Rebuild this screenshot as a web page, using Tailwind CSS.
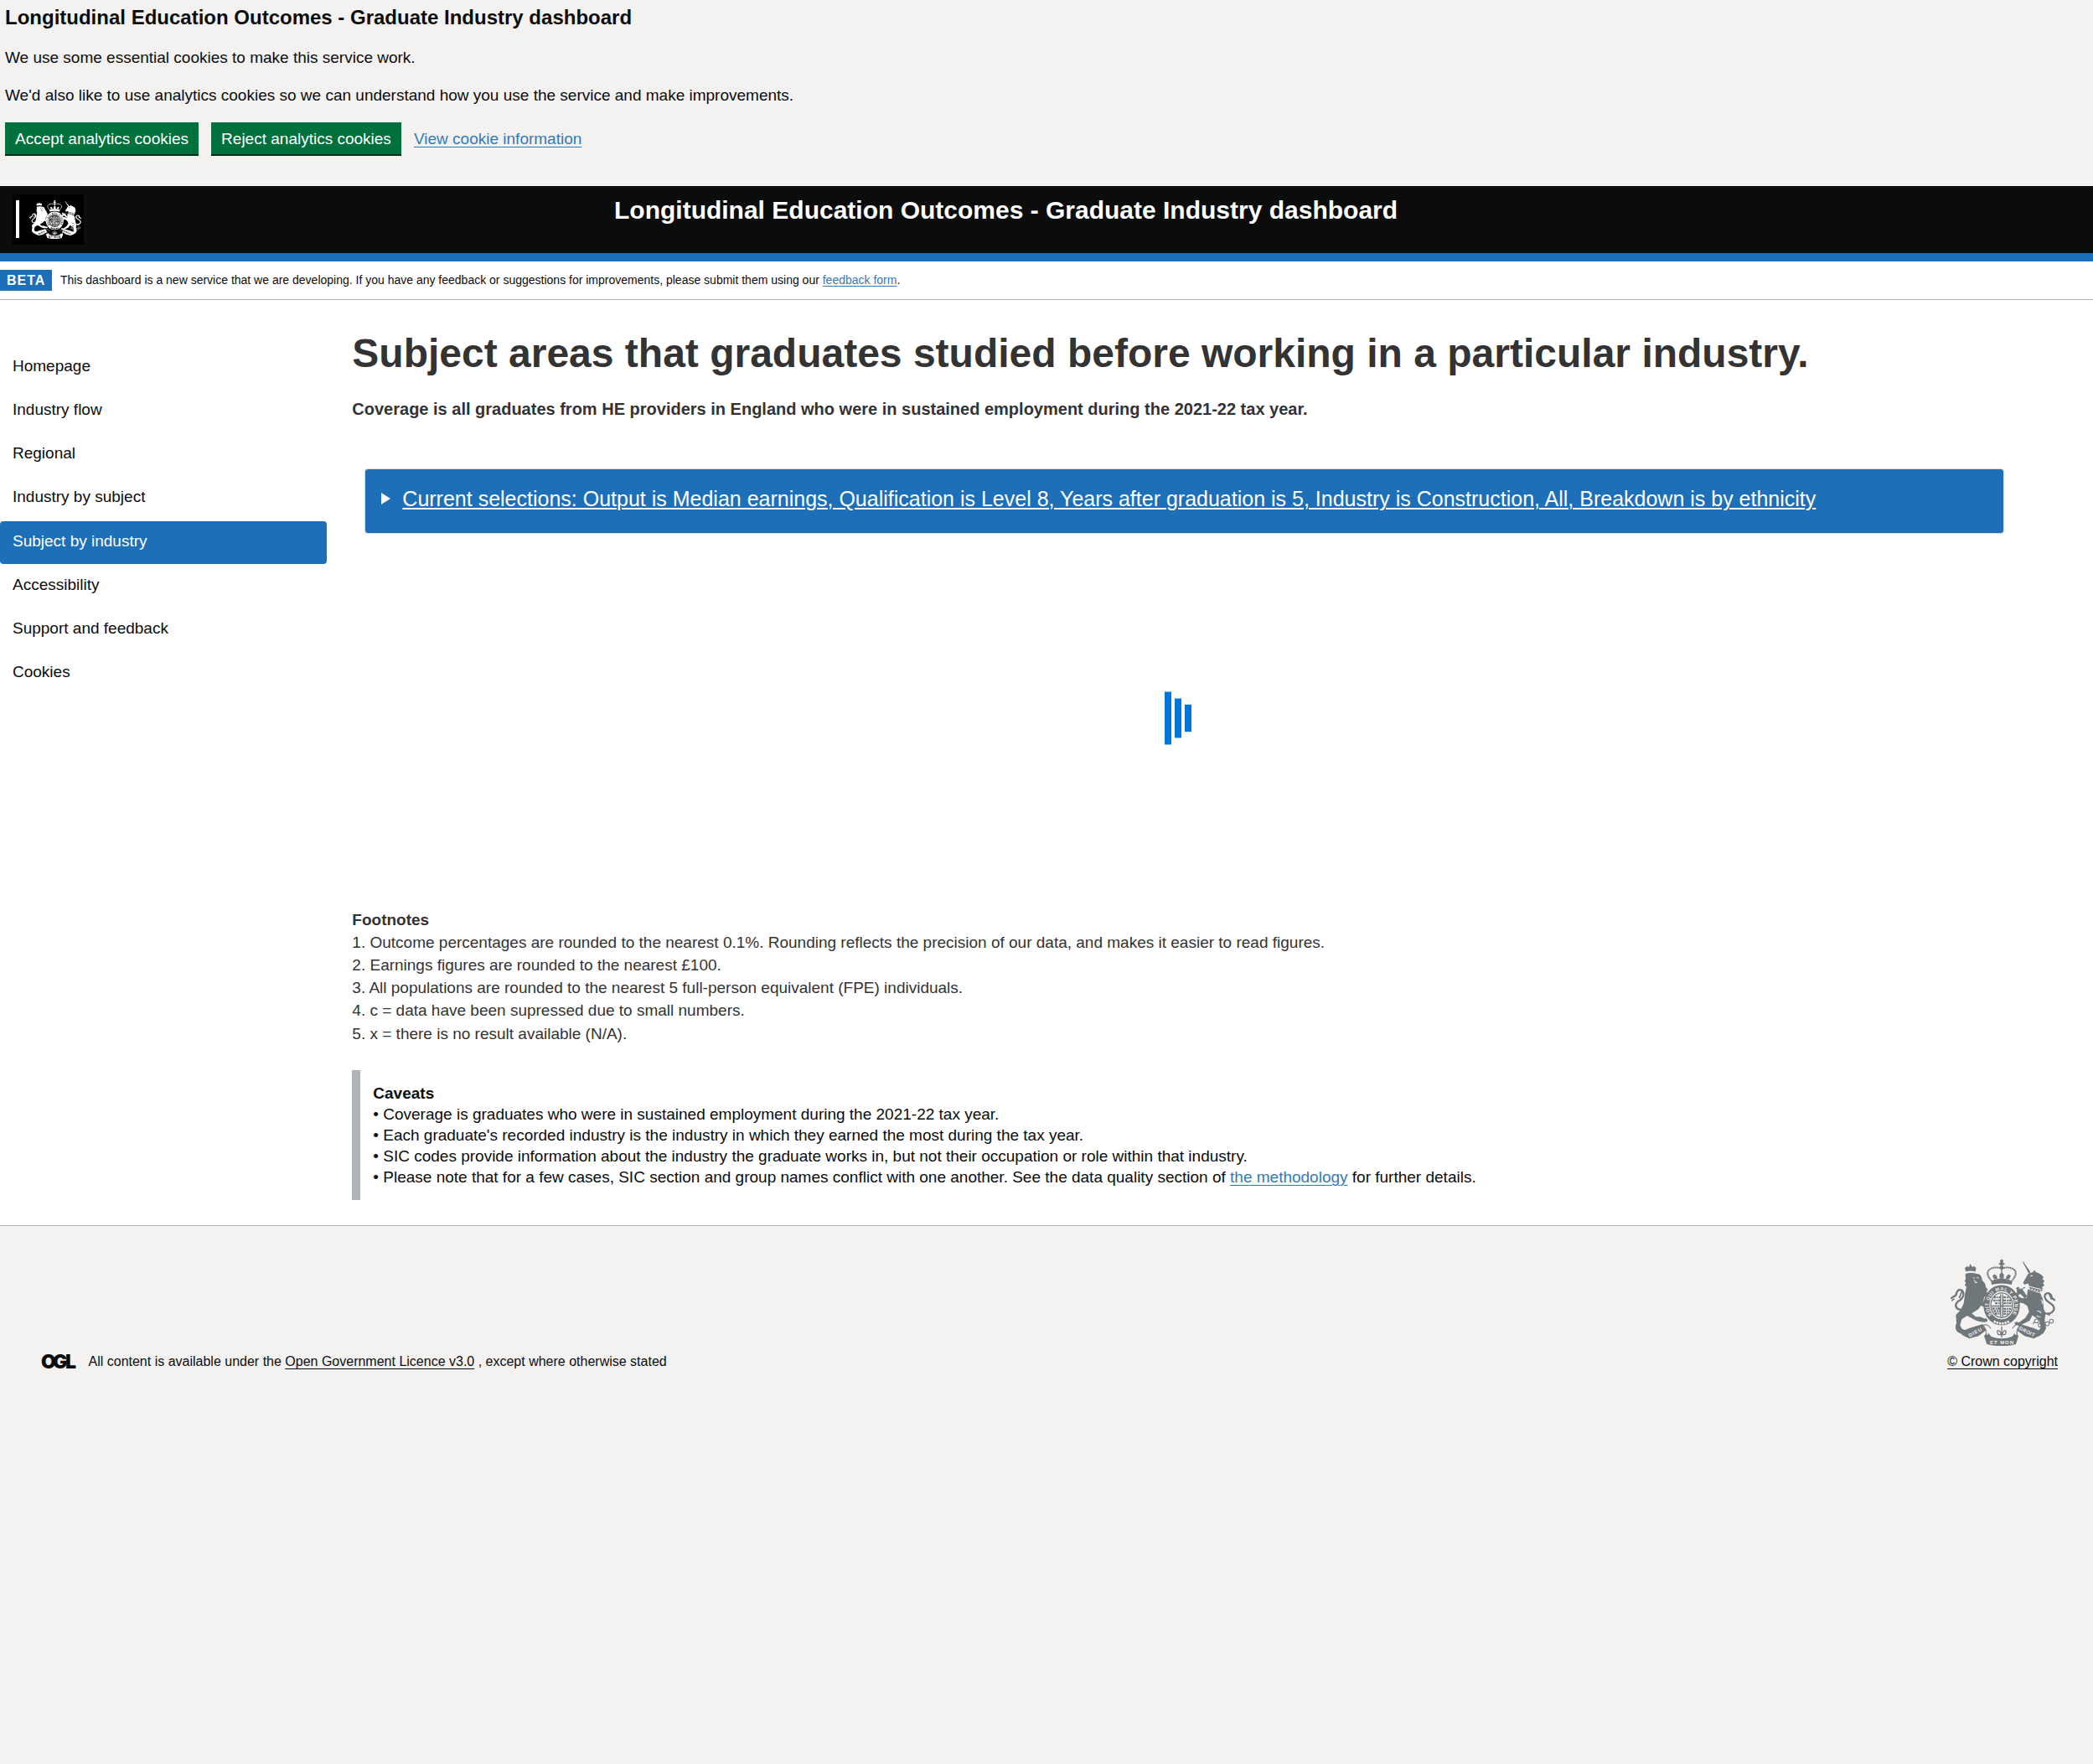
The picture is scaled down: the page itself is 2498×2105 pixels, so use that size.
<!DOCTYPE html>
<html lang="en">
<head>
<meta charset="utf-8">
<title>Longitudinal Education Outcomes - Graduate Industry dashboard</title>
<script src="https://cdn.jsdelivr.net/npm/@tailwindcss/browser@4"></script>
</head>
<body class="bg-[#f3f2f1] font-['Liberation_Sans',Arial,sans-serif] text-[19px] leading-[25px] text-[#0b0c0c]">

<!-- Shared coat of arms, drawn in currentColor with --ground as the knock-out colour -->
<svg class="hidden" aria-hidden="true">
  <symbol id="arms" viewBox="84 158 375 308" preserveAspectRatio="none">
    <g fill="currentColor" stroke="none">
      <!-- crown -->
      <circle cx="267" cy="164" r="6"/><path d="M263 168h8l3 6-3 6h-8l-3-6zM257 171h20v6h-20z"/>
      <circle cx="267" cy="187" r="7"/>
      <path d="M229 234q38-10 76 0l-2 14q-36-9-72 0z"/>
      <path d="M240 228l-6-12 8-6 8 8 2 8zM260 226l-1-14 8-9 8 9-1 14zM294 228l6-12-8-6-8 8-2 8z"/>
      <!-- lion -->
      <path d="M139 201l-4-12 8-7 7 3 5-12 6 12 7-3 8 7-4 12q-17-5-33 0z"/>
      <path d="M137 208q26-7 51 3 10 10 9 22 12 9 13 22l8 12-5 2 4 13-11 9q-8 16 1 25l6 8q-11 7-20-2-6 13-20 20l-13 8 14 12 18 1 13 6 8-1 4 8-6 5q-20 2-38-6l-30-17-19 13-6 22 8 13 18 6 1 8-17 4q-14-1-22-11-8-13-1-28l-2-30 16-15 12-25 5-36 5-24-6-6 4-8-5-6 4-7z"/>
      <!-- unicorn -->
      <path d="M341 165l5 3 24 35-6 5z"/>
      <path d="M362 209l18-7 4-7 5 8q22 6 28 20l-4 4 8 9-6 5 5 10-8 4 1 12-8 8-38-10-3-16-2-6-14 5-4-8 8-14z"/>
      <path d="M360 264l45 14 9 20 4 37 6 13-3 27 5 29-10 18-16 6-8-11 7-4 8-13-6-26-24-17-10 19-32 16-16 4-5-7 19-9 19-14 13-21-6-21-14-10-17-3-10-15-2-18 8-2 4 14 12 6 17-1z"/>
      <path d="M321 268l14-7 11 10 13 19-10 6-14-15-12 3z"/>
      <path d="M318 260l10-5 3 8-8 6zM312 384l11-5 4 8-9 3z"/>
    </g>
    <g fill="none" stroke="currentColor">
      <!-- crown arches -->
      <path stroke-width="6" stroke-dasharray="6 1.500" d="M231 234q-24-26-8-40 18-13 44-4 27-9 44 4 16 14-8 40"/>
      <path stroke-width="4" d="M267 188v22M238 232q29-8 58 0"/>
      <!-- lion tail, unicorn tail -->
      <path stroke-width="7" d="M138 338q-31 2-35-13-2-13 15-22 16-13 11-29-4-9-14-8-9 4-12 20l-19 11"/>
      <path stroke-width="5" d="M98 298l-10 7M127 266l-12 30"/>
      <path stroke-width="7" d="M417 349q28 8 37-12 3-14-13-23-21-12-20-27 5-12 16-8 10 4 9 16l13 9"/>
      <path stroke-width="5" d="M430 352l10 5M437 281l9 20"/>
      <!-- chain -->
      <g stroke-width="3"><circle cx="392" cy="377" r="7"/><circle cx="405" cy="392" r="7"/><circle cx="430" cy="387" r="7"/><circle cx="445" cy="378" r="7"/><path d="M413 391h10M383 380l-4 9M414 409l8-10"/></g>
      <!-- unicorn collar -->
      <path stroke-width="4" d="M336 276q4-18 15-18M330 298q15 10 17 2"/>
      <!-- garter -->
      <ellipse cx="267" cy="321" rx="54" ry="61" stroke-width="22"/>
      <ellipse cx="267" cy="321" rx="39" ry="44" stroke-width="4"/>
      <path stroke-width="7" stroke-dasharray="9 3 5 2" d="M236 304h26M239 293h23M243 314h18M274 293h22M273 304h28M274 314h27M233 333h28M238 342h23M242 351h20M274 334h26M274 343h23M274 352h19"/>
      <path stroke-width="4" d="M263 282v79M271 282v79M230 324h74"/>
      <!-- ornament beneath -->
      <path stroke-width="4" d="M267 397v39M256 427q-9-14-1-16 9 2 9 16M278 427q9-14 1-16-9 2-9 16M254 426h26"/>
    </g>
    <!-- highlights -->
    <g class="stroke-[var(--ground)]" fill="none" stroke-width="3">
      <path d="M138 207q20-7 46 2M164 222l7 3M178 222l7 2M169 231l4 10 7-2M364 254l45 11M370 218l8-3"/>
      <path stroke-width="4" stroke-dasharray="5 5" d="M364 261l44 11"/>
      <path stroke-width="3" d="M407 302q9 5 4 15M394 342q12-1 14 8M392 359l14 5"/>
      <ellipse cx="267" cy="321" rx="43.500" ry="49" stroke-width="2"/>
      <path stroke-width="8" stroke-dasharray="7 3" d="M239 378q28 16 56 0"/>
    </g>
    <!-- ribbon -->
    <g>
      <path fill="currentColor" d="M106 400l22 13 22-10 50-15 12 22-28 21-33 9-25-12zM427 400l-22 13-22-10-50-15-13 22 29 21 33 9 25-12zM204 431l12-14 14 16q37 13 74 0l14-16 9 14-9 29q-51 14-104 0z"/>
      <path class="stroke-[var(--ground)]" fill="none" stroke-width="6" d="M224 403q-12-15-18-4 12 6 9 27M309 403q12-15 18-4-12 6-9 27"/>
      <path stroke="currentColor" fill="none" stroke-width="3" d="M228 404q-15-22-27-8 13 7 10 30M305 404q15-22 27-8-13 7-10 30"/>
      <g class="fill-[var(--ground)] font-['Liberation_Sans',Arial,sans-serif] font-bold" font-size="18">
        <text x="225" y="459" textLength="84">ET MON</text>
        <text transform="translate(152 435) rotate(-27)" textLength="51">DIEU</text>
        <text transform="translate(328 407) rotate(27)" textLength="60">DROIT</text>
        <path id="motto" fill="none" d="M232 356A47 53 0 1 1 302 356"/>
        <text font-size="17"><textPath href="#motto" textLength="228">SOIT QUI MAL Y PENSE</textPath></text>
      </g>
    </g>
  </symbol>
</svg>

<!-- Cookie banner -->
<section class="h-[222px] px-1.5 pt-1.5">
  <h2 class="mb-5 text-[24px] leading-[30px] font-bold">Longitudinal Education Outcomes - Graduate Industry dashboard</h2>
  <p class="mb-5">We use some essential cookies to make this service work.</p>
  <p class="mb-5">We'd also like to use analytics cookies so we can understand how you use the service and make improvements.</p>
  <div class="flex items-start gap-[15px]">
    <button class="h-10 w-[231px] border-b-2 border-[#002d18] bg-[#00703c] pt-px text-white">Accept analytics cookies</button>
    <button class="h-10 w-[227px] border-b-2 border-[#002d18] bg-[#00703c] pt-px text-white">Reject analytics cookies</button>
    <a href="#" class="pt-[7px] text-[#337ab7] underline decoration-1 underline-offset-[3px]">View cookie information</a>
  </div>
</section>

<!-- Header -->
<header class="flex h-[90px] items-start border-b-10 border-[#1d70b8] bg-[#0b0c0c] pt-2.5 pl-[15px] text-white">
  <div class="flex h-[60px] w-[85px] items-start bg-black pt-[7px] pl-1">
    <div class="h-[45px] w-1 bg-white"></div>
    <svg class="ml-3 h-[46px] w-[62px] [--ground:#000]"><use href="#arms"/></svg>
  </div>
  <h1 class="ml-[633px] text-[30px] leading-[38px] font-bold">Longitudinal Education Outcomes - Graduate Industry dashboard</h1>
</header>

<!-- Phase banner -->
<div class="flex h-[46px] items-start border-b border-[#b1b4b6] bg-white pt-2.5">
  <strong class="h-[25px] w-[62px] bg-[#1d70b8] pl-2 text-[16px] leading-[25px] tracking-[1px] text-white">BETA</strong>
  <p class="pl-[10px] text-[14px] leading-[25px]">This dashboard is a new service that we are developing. If you have any feedback or suggestions for improvements, please submit them using our <a href="#" class="text-[#337ab7] underline decoration-1 underline-offset-2">feedback form</a>.</p>
</div>

<div class="flex h-[1104px] items-start bg-white">
  <nav class="mt-[55px] flex w-[390px] flex-col gap-px">
    <a href="#" class="h-[51.14px] pt-[11px] pl-[15px]">Homepage</a>
    <a href="#" class="h-[51.14px] pt-[11px] pl-[15px]">Industry flow</a>
    <a href="#" class="h-[51.14px] pt-[11px] pl-[15px]">Regional</a>
    <a href="#" class="h-[51.14px] pt-[11px] pl-[15px]">Industry by subject</a>
    <a href="#" class="h-[51.14px] rounded bg-[#1d70b8] pt-[11px] pl-[15px] text-white">Subject by industry</a>
    <a href="#" class="h-[51.14px] pt-[11px] pl-[15px]">Accessibility</a>
    <a href="#" class="h-[51.14px] pt-[11px] pl-[15px]">Support and feedback</a>
    <a href="#" class="h-[51.14px] pt-[11px] pl-[15px]">Cookies</a>
  </nav>

  <main class="ml-[30.33px] grow pt-[37px] text-[#333]">
    <h1 class="text-[48px] leading-[53px] font-bold">Subject areas that graduates studied before working in a particular industry.</h1>
    <p class="mt-[27px] text-[20px] leading-[26px] font-bold">Coverage is all graduates from HE providers in England who were in sustained employment during the 2021-22 tax year.</p>

    <div class="mt-[58px] ml-[15px] flex h-[78px] w-[1957px] items-start rounded border border-[#ddd] bg-[#1d70b8] pt-[21px] pl-[19px] text-[25px] leading-7 text-white">
      <svg class="mt-[7px] mr-[14px] h-[14px] w-[11px]" viewBox="0 0 11 14"><path fill="#fff" d="M0 0l11 7-11 7z"/></svg>
      <span class="underline decoration-2 underline-offset-[2px]">Current selections: Output is Median earnings, Qualification is Level 8, Years after graduation is 5, Industry is Construction, All, Breakdown is by ethnicity</span>
    </div>

    <!-- Loading bars -->
    <div class="flex h-[440px] items-center pl-[969.67px]">
      <svg class="h-16 w-8" viewBox="0 0 32 64" fill="#0275d8"><path d="M0 .5h8v63H0zM12 8.400h8v47.200h-8zM24 15.750h8v32.500h-8z"/></svg>
    </div>

    <div class="mt-[6.87px] leading-[27.14px]">
      <h2 class="font-bold">Footnotes</h2>
      <p>1. Outcome percentages are rounded to the nearest 0.1%. Rounding reflects the precision of our data, and makes it easier to read figures.</p>
      <p>2. Earnings figures are rounded to the nearest £100.</p>
      <p>3. All populations are rounded to the nearest 5 full-person equivalent (FPE) individuals.</p>
      <p>4. c = data have been supressed due to small numbers.</p>
      <p>5. x = there is no result available (N/A).</p>
    </div>

    <div class="mt-[30.13px] border-l-10 border-[#b1b4b6] p-[15px] text-[#0b0c0c]">
      <h2 class="font-bold">Caveats</h2>
      <p>• Coverage is graduates who were in sustained employment during the 2021-22 tax year.</p>
      <p>• Each graduate's recorded industry is the industry in which they earned the most during the tax year.</p>
      <p>• SIC codes provide information about the industry the graduate works in, but not their occupation or role within that industry.</p>
      <p>• Please note that for a few cases, SIC section and group names conflict with one another. See the data quality section of <a href="#" class="text-[#337ab7] underline decoration-1 underline-offset-[3px]">the methodology</a> for further details.</p>
    </div>
  </main>
</div>

<!-- Footer -->
<footer class="flex items-end justify-between border-t border-[#b1b4b6] pt-10 pr-[42px] pl-[50px] text-[16px] leading-5">
  <div class="flex items-center">
    <svg class="mr-[14.5px] h-[18px] w-[41px] overflow-visible" viewBox="0 0 41 18"><text class="font-['Inter',sans-serif] font-black" x="-1 13 28" y="16.800" font-size="23" fill="#0b0c0c">OGL</text></svg>
    <p>All content is available under the <a href="#" class="underline decoration-1 underline-offset-[3px]">Open Government Licence v3.0</a> , except where otherwise stated</p>
  </div>
  <div class="flex flex-col items-center">
    <svg class="mb-[9px] h-[103px] w-[125px] text-[#6f777b] [--ground:#f3f2f1]"><use href="#arms"/></svg>
    <a href="#" class="underline decoration-1 underline-offset-[3px]">© Crown copyright</a>
  </div>
</footer>
</body>
</html>
